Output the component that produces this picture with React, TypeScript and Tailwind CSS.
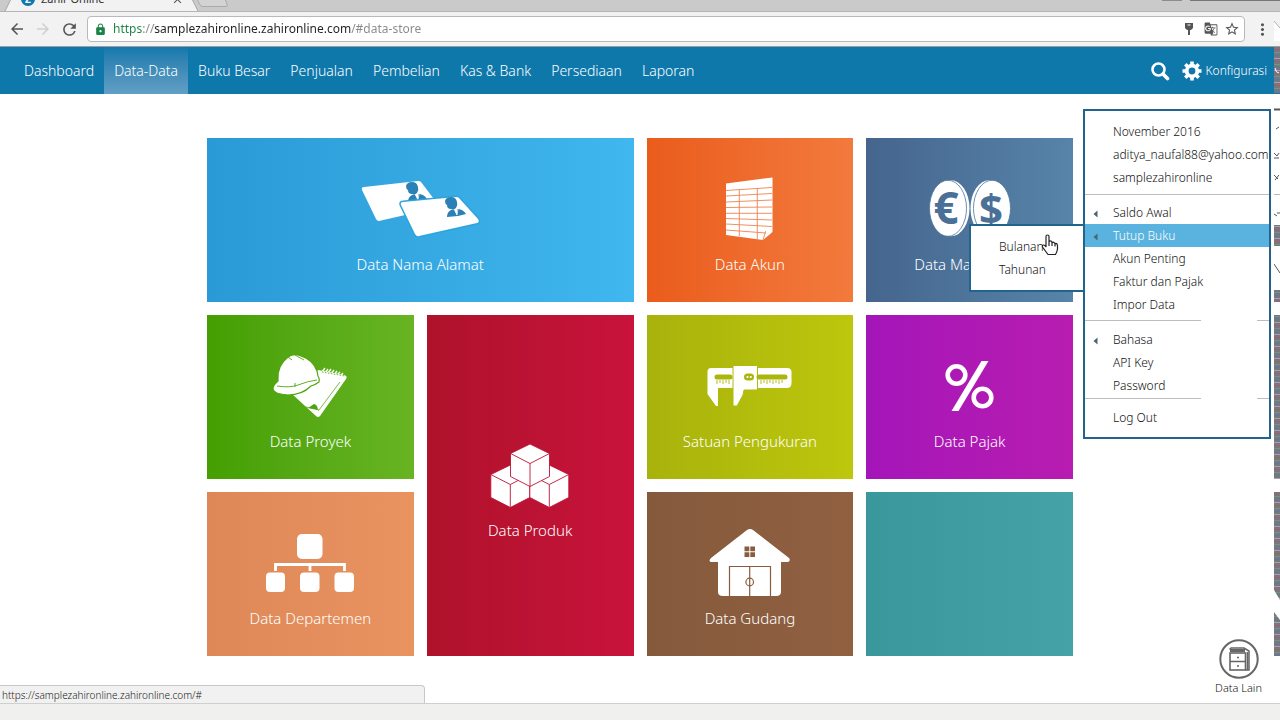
import type { ReactNode } from "react";
import {
  MdArrowBack,
  MdArrowForward,
  MdClose,
  MdGTranslate,
  MdLock,
  MdMoreVert,
  MdRefresh,
  MdStarBorder,
} from "react-icons/md";

type Tile = { label?: string; color: string; span?: string; icon?: ReactNode };

function Art({ children }: { children: ReactNode }) {
  return (
    <svg width="120" height="84" viewBox="0 0 120 84" fill="#fff" aria-hidden="true">
      {children}
    </svg>
  );
}

function Person({ x, y }: { x: number; y: number }) {
  return (
    <g transform={`translate(${x} ${y})`} fill="#2b80b5">
      <path d="M-6-5Q-5-9 0-9Q5-9 6-4Q7-1 5 2Q3 4 0 3Q-4 3-4-1Q-6-2-6-5Z" />
      <path d="M-4 11Q-4 6 0 4L3 3L6 9L6 3Q12 3 15 8L7 10Z" />
      <path d="M3 3L6 9L7 3" fill="none" stroke="#fff" strokeWidth="0.8" />
    </g>
  );
}

const cards = (
  <Art>
    <path d="M4 21L58 15Q60 15 61 16L80 41L19 55Q17 55 16 53L2 24Q1 21 4 21Z" />
    <Person x={52} y={25} />
    <path
      d="M43 36L96 31Q98 31 99 32L118 53Q120 56 117 57L59 70Q57 71 55 68L41 39Q40 36 43 36Z"
      stroke="#2fa3dd"
      strokeWidth="3"
    />
    <path d="M43 36L96 31Q98 31 99 32L118 53Q120 56 117 57L59 70Q57 71 55 68L41 39Q40 36 43 36Z" />
    <Person x={91} y={40} />
  </Art>
);

const sheet = (
  <Art>
    <path d="M36 17.5L82.5 11.5V66L73 74L36 69Z" />
    <g stroke="#f1824d" strokeWidth="0.9" fill="none">
      <path d="M36 24.5L82 21.5M36 30L82 27.5M36 36L82 34M36 41.5L82 41M36 47.3H82M36 52.5L82 54M36 58L82 60.5M36 64L76 67" />
      <path d="M49.3 23.5V70M67.3 22V73" />
      <path d="M73 74L75.5 65.5L82.5 66" />
    </g>
    <path d="M76 71V65L82 60.5V66Z" />
  </Art>
);

const coins = (
  <Art>
    <ellipse cx="41" cy="42.3" rx="18.5" ry="28" />
    <ellipse cx="38" cy="42.3" rx="18.5" ry="28" stroke="#4d739b" strokeWidth="0.8" />
    <ellipse cx="79" cy="42.3" rx="18.5" ry="28" />
    <ellipse cx="82" cy="42.3" rx="18.5" ry="28" stroke="#4d739b" strokeWidth="0.8" />
    <g
      fill="#4b7098"
      fontFamily="'Noto Sans', sans-serif"
      fontWeight="700"
      fontSize="44"
      textAnchor="middle"
    >
      <text x="36" y="58">€</text>
      <text x="81" y="58" fontSize="42">$</text>
    </g>
  </Art>
);

const helmet = (
  <Art>
    <path d="M68 27L94 32Q98 33 96 36L70 73Q68 75 66 73L42 51Z" />
    <path d="M56 64L69 67L90 39" fill="none" stroke="#58aa14" strokeWidth="0.8" />
    <path d="M58 65L64 61Q68 62 68 68L69 67L64 66Z" fill="#4fa30d" />
    <path
      d="M72 29L75 25M75 30L78 26M78 30L81 26M81 31L84 27M84 32L87 28M87 32L90 29M90 33L93 30"
      stroke="#fff"
      strokeWidth="1.4"
    />
    <path d="M72 29L95 33" stroke="#58aa14" strokeWidth="0.9" strokeDasharray="1.5 1.5" />
    <path
      d="M28 36Q27 23 38 14Q44 10 51 13Q63 17 67 28L68 33Q70 36 69 39Q65 42 61 43Q52 52 38 52Q24 51 23 46Q23 42 28 38Z"
      stroke="#52a50f"
      strokeWidth="1.2"
    />
    <path
      d="M27 43Q40 45 48 42Q58 38 67 37M38 14L42 17M45 12L54 17M45 44V40"
      fill="none"
      stroke="#52a50f"
      strokeWidth="0.9"
    />
  </Art>
);

function Cube({ x, y }: { x: number; y: number }) {
  return (
    <g transform={`translate(${x} ${y})`} stroke="#bd1233" strokeWidth="0.9" strokeLinejoin="round">
      <path d="M0-21L19.5-11.5V11.5L0 21.5L-19.5 11.5V-11.5Z" />
      <path d="M-19.5-11.5L0-1.5L19.5-11.5M0-1.5V21.5" fill="none" />
    </g>
  );
}

const cubes = (
  <Art>
    <Cube x={40.3} y={54} />
    <Cube x={79.3} y={54} />
    <Cube x={60} y={33} />
  </Art>
);

const caliper = (
  <Art>
    <path d="M21 25H97Q101.5 25 101.5 29V40Q101.5 45 97 45H54L53 52L47 63H43V45H28V63H26L17.5 51V29Q17.5 25 21 25Z" />
    <path d="M43 22.5H67.5V47H54L53 52L47 63H43Z" stroke="#b1bb0c" strokeWidth="1" />
    <g stroke="#aab60c">
      <path d="M27 34H40M69 34H95" strokeWidth="5" strokeLinecap="round" />
      <path
        d="M27 37V41M30 37V40M33 37V41M36 37V40M39 37V41M71 37V41M74 37V40M77 37V41M80 37V40M83 37V41M86 37V40M89 37V41M92 37V40"
        strokeWidth="0.9"
      />
    </g>
    <rect x="54" y="30.5" width="10" height="7" rx="3.5" fill="#aab60c" />
    <circle cx="57.5" cy="34" r="1.1" />
    <circle cx="60.8" cy="34" r="1.1" />
  </Art>
);

const percent = (
  <Art>
    <g fill="none" stroke="#fff" strokeWidth="4.6">
      <circle cx="46.5" cy="32" r="8.8" />
      <circle cx="72.5" cy="54.5" r="8.8" />
    </g>
    <path d="M71.5 18H78.5L48.5 68H41.5Z" />
  </Art>
);

const orgChart = (
  <Art>
    <rect x="47" y="14" width="25.5" height="25" rx="5" />
    <path d="M25.5 51V44.5H94.5V51M60 44V51" fill="none" stroke="#fff" strokeWidth="2.8" />
    <rect x="16" y="52.5" width="19" height="19.5" rx="4" />
    <rect x="50" y="52.5" width="19.5" height="19.5" rx="4" />
    <rect x="84.5" y="52.5" width="19.5" height="19.5" rx="4" />
  </Art>
);

const warehouse = (
  <Art>
    <path d="M57 10Q60 8 63 10L99 38Q101 41 98 42H91V72Q91 76 86 76H33Q28 76 28 72V42H21Q18 41 21 38Z" />
    <g fill="none" stroke="#8a5c3e" strokeWidth="1.2">
      <path d="M39.5 76V46.5H80.5V76M59.7 46.5V76" />
      <circle cx="59.7" cy="62" r="3.8" />
    </g>
    <path
      d="M54.5 26.5H59.3V31.3H54.5ZM60.3 26.5H65V31.3H60.3ZM54.5 32.3H59.3V37H54.5ZM60.3 32.3H65V37H60.3Z"
      fill="#8a5c3e"
    />
  </Art>
);

const tiles: Tile[] = [
  { label: "Data Nama Alamat", color: "from-[#2a9ad6] to-[#40b7ee]", span: "col-span-2", icon: cards },
  { label: "Data Akun", color: "from-[#ea5c1b] to-[#f27a3c]", icon: sheet },
  { label: "Data Mata Uang", color: "from-[#45658d] to-[#5784aa]", icon: coins },
  { label: "Data Proyek", color: "from-[#449f02] to-[#68b423]", icon: helmet },
  { label: "Data Produk", color: "from-[#af122b] to-[#c8133b]", span: "row-span-2", icon: cubes },
  { label: "Satuan Pengukuran", color: "from-[#a8b20c] to-[#bdc70c]", icon: caliper },
  { label: "Data Pajak", color: "from-[#a415b9] to-[#b81cb0]", icon: percent },
  { label: "Data Departemen", color: "from-[#de8858] to-[#e89360]", icon: orgChart },
  { label: "Data Gudang", color: "from-[#855a3c] to-[#906041]", icon: warehouse },
  { color: "from-[#3a989d] to-[#45a3a7]" },
];

const navItems = [
  "Dashboard",
  "Data-Data",
  "Buku Besar",
  "Penjualan",
  "Pembelian",
  "Kas & Bank",
  "Persediaan",
  "Laporan",
];

function MenuRow({
  label,
  arrow,
  active,
  children,
}: {
  label: string;
  arrow?: boolean;
  active?: boolean;
  children?: ReactNode;
}) {
  return (
    <li className={active ? "relative bg-[#59b3de] text-white" : "relative"}>
      <a href="#" className="flex h-[23px] items-center whitespace-nowrap">
        <span className="flex w-7 shrink-0 pl-2">
          {arrow && (
            <svg width="5" height="8" viewBox="0 0 5 8" className="mt-0.5" aria-hidden="true">
              <path d="M4.5 0.5V7.5L0.5 4Z" fill="#4d6470" />
            </svg>
          )}
        </span>
        {label}
      </a>
      {children}
    </li>
  );
}

function BrokenRule() {
  return (
    <div className="flex justify-between">
      <span className="h-px w-[116px] bg-[#bdbdbd]" />
      <span className="h-px w-3 bg-[#bdbdbd]" />
    </div>
  );
}

function ConfigMenu() {
  return (
    <div className="absolute top-[15px] right-[9px] w-[188px] border-2 border-[#22648b] bg-white text-xs font-light text-[#111]">
      <ul className="border-b border-[#bdbdbd] pt-[9px] pb-[5px]">
        <MenuRow label="November 2016" />
        <MenuRow label="aditya_naufal88@yahoo.com" />
        <MenuRow label="samplezahironline" />
      </ul>
      <ul className="pt-1.5 pb-1">
        <MenuRow label="Saldo Awal" arrow />
        <MenuRow label="Tutup Buku" arrow active>
          <ul className="absolute top-0 right-full w-[116px] border-2 border-[#22648b] bg-white py-[9px] text-[#111]">
            <li>
              <a href="#" className="flex h-[23px] items-center pl-7">Bulanan</a>
            </li>
            <li>
              <a href="#" className="flex h-[23px] items-center pl-7">Tahunan</a>
            </li>
            <li className="pointer-events-none absolute top-2 right-6" aria-hidden="true">
              <svg width="18" height="22" viewBox="0 0 18 22">
                <path
                  d="M5 13V2.5Q5 1 6.5 1Q8 1 8 2.5V8Q8.5 6.5 10 7Q11 7.5 11 9Q12 7.5 13 8.5Q14 9 14 10Q15 9 16 10Q16.5 11 16.5 12V15Q16 18 14.5 20.5H7L1.5 13Q1 11 2.5 11Q4 11 5 13ZM8 8V12M11 9V12M14 10V12.5"
                  fill="#fff"
                  stroke="#222"
                  strokeWidth="1.2"
                />
              </svg>
            </li>
          </ul>
        </MenuRow>
        <MenuRow label="Akun Penting" />
        <MenuRow label="Faktur dan Pajak" />
        <MenuRow label="Impor Data" />
      </ul>
      <BrokenRule />
      <ul className="pt-[7px] pb-px">
        <MenuRow label="Bahasa" arrow />
        <MenuRow label="API Key" />
        <MenuRow label="Password" />
      </ul>
      <BrokenRule />
      <ul className="pt-[7px] pb-2">
        <MenuRow label="Log Out" />
      </ul>
    </div>
  );
}

function BrowserChrome() {
  return (
    <div className="border-b border-[#9d9d9d] bg-[#f2f2f2]">
      <div className="flex h-3 items-end overflow-hidden border-b border-[#b5b5b5] bg-[#cacaca]">
        <svg width="12" height="12" viewBox="0 0 12 12" className="shrink-0" aria-hidden="true">
          <path d="M5 12L11 0H12V12Z" fill="#f2f2f2" />
          <path d="M5 12L11 0" stroke="#a5a5a5" />
        </svg>
        <div className="flex h-6 w-[180px] shrink-0 items-center bg-[#f2f2f2] pl-[9px]">
          <span className="flex size-3.5 items-center justify-center rounded-full bg-[#1277ab] text-[10px] font-bold text-white">
            Z
          </span>
          <span className="ml-1.5 flex-1 text-[11px] leading-6 text-[#333]">Zahir Online</span>
          <button type="button" aria-label="Close tab" className="mr-2 text-[#555]">
            <MdClose size={13} />
          </button>
        </div>
        <svg width="40" height="12" viewBox="0 0 40 12" className="shrink-0" aria-hidden="true">
          <path d="M0 0L6 12H0Z" fill="#f2f2f2" />
          <path d="M0 0L6 12" stroke="#a5a5a5" />
          <path d="M5 0L8 6Q9 7.5 11 7.5H34Q36 7.5 35 5L33 0" fill="#d3d3d3" stroke="#a9a9a9" />
        </svg>
        <div className="ml-auto flex self-start">
          <span className="h-px w-5 bg-[#8d8d8d]" />
          <span className="ml-2 h-px w-[90px] bg-[#777]" />
        </div>
      </div>
      <div className="flex h-[34px] items-center px-2 text-[#555]">
        <button type="button" aria-label="Back"><MdArrowBack size={18} /></button>
        <button type="button" aria-label="Forward" className="ml-2 text-[#cfcfcf]">
          <MdArrowForward size={18} />
        </button>
        <button type="button" aria-label="Reload" className="mr-2 ml-2"><MdRefresh size={19} /></button>
        <div className="flex h-[26px] flex-1 items-center rounded-sm border border-[#b9b9b9] bg-white pr-1 pl-1.5">
          <MdLock size={13} className="text-[#1b8444]" />
          <input
            aria-label="Address"
            defaultValue="https://samplezahironline.zahironline.com/#data-store"
            className="ml-1.5 min-w-0 flex-1 bg-[linear-gradient(90deg,#1b8444_29px,#888_29px,#888_41px,#222_41px,#222_238px,#888_238px)] bg-clip-text text-xs text-transparent outline-none"
          />
          <svg width="10" height="14" viewBox="0 0 10 14" aria-label="Saved password">
            <path d="M1 1H9V6L7 8H6V13H4V8H3L1 6Z" fill="#555" />
            <path d="M3.5 3H6.5" stroke="#fff" />
          </svg>
          <MdGTranslate size={14} className="ml-2.5" />
          <MdStarBorder size={16} className="ml-1.5" />
        </div>
        <button type="button" aria-label="Browser menu" className="ml-2"><MdMoreVert size={19} /></button>
      </div>
    </div>
  );
}

function EdgeNoise() {
  return (
    <svg
      width="6"
      height="720"
      viewBox="0 0 6 720"
      className="pointer-events-none absolute top-0 right-0"
      aria-hidden="true"
    >
      <defs>
        <pattern id="noise" width="6" height="12" patternUnits="userSpaceOnUse">
          <rect width="6" height="12" fill="#77777f" />
          <path d="M0 1.5H6" stroke="#a75f6d" />
          <path d="M0 4.5H6" stroke="#6a9b74" />
          <path d="M0 7.5H6" stroke="#6673a3" />
          <path d="M0 10.5H6" stroke="#a9a0ad" />
        </pattern>
      </defs>
      <path d="M0 20L6 27V41H0Z" fill="#fff" />
      <path d="M0 21L6 28" stroke="#aaa" />
      <g fill="url(#noise)">
        <path d="M0 47H6V93H0ZM0 225H6V246H0ZM0 290H6V302H0ZM0 315H6V479H0ZM0 492H6V600L0 590ZM0 612L6 620V656H0Z" />
      </g>
      <path d="M1 68Q2 73 5 73" stroke="#fff" fill="none" />
      <path d="M0 109.5H6" stroke="#555" strokeWidth="2" />
      <path d="M0 194.5H6" stroke="#bbb" />
      <path
        d="M2 129L5 127M0 153L3 156L5 153M0 158H5M0 175L4 179M1 180L5 175M0 214L3 216M3 213H6M0 264L6 273"
        stroke="#555"
        fill="none"
      />
    </svg>
  );
}

export default function App() {
  return (
    <div className="relative flex min-h-screen flex-col overflow-hidden bg-white font-['Noto_Sans','Open_Sans',sans-serif]">
      <BrowserChrome />
      <header className="flex h-[47px] items-center bg-[#0e78ab] pr-[13px] pl-3.5 text-white">
        <nav className="flex h-full text-sm font-light">
          {navItems.map((item) => (
            <a
              key={item}
              href="#"
              className={
                item === "Data-Data"
                  ? "flex items-center bg-linear-to-b from-[#1279ac] to-[#619fc5] px-2.5"
                  : "flex items-center px-2.5"
              }
            >
              {item}
            </a>
          ))}
        </nav>
        <button type="button" aria-label="Search" className="ml-auto">
          <svg width="20" height="20" viewBox="0 0 20 20" fill="none" stroke="#fff">
            <circle cx="8.5" cy="8.5" r="6" strokeWidth="2.6" />
            <path d="M13 13L17.5 17.5" strokeWidth="3.6" strokeLinecap="round" />
          </svg>
        </button>
        <button type="button" className="ml-3 flex items-center gap-1 text-xs font-light">
          <svg width="20" height="20" viewBox="0 0 20 20" aria-hidden="true">
            <circle cx="10" cy="10" r="5.3" fill="none" stroke="#fff" strokeWidth="3.8" />
            <path
              d="M10 0.5V4M10 16V19.5M0.5 10H4M16 10H19.5M3.3 3.3L5.5 5.5M14.5 14.5L16.7 16.7M3.3 16.7L5.5 14.5M14.5 5.5L16.7 3.3"
              stroke="#fff"
              strokeWidth="3.6"
            />
          </svg>
          Konfigurasi
        </button>
      </header>

      <main className="relative flex-1 px-6 pt-11 pb-[47px]">
        <div className="mx-auto grid max-w-[866px] auto-rows-[164px] grid-cols-4 gap-[13px]">
          {tiles.map((tile, i) => (
            <a
              key={i}
              href="#"
              aria-label={tile.label ?? "Data"}
              className={`flex flex-col items-center justify-center gap-1 bg-linear-to-r text-[15px] leading-5 font-light text-white ${tile.color} ${tile.span ?? ""}`}
            >
              {tile.icon}
              {tile.label}
            </a>
          ))}
        </div>

        <ConfigMenu />

        <a
          href="#"
          className="absolute right-[18px] bottom-[7px] flex flex-col items-center text-[11px] leading-4 font-light text-[#111]"
        >
          <svg
            width="40"
            height="40"
            viewBox="0 0 40 40"
            fill="none"
            stroke="#666"
            className="mb-px"
            aria-hidden="true"
          >
            <circle cx="20" cy="20" r="18.7" strokeWidth="2" />
            <path d="M10.5 10.5L12 9H25L30 12V31H27" strokeWidth="1.5" />
            <path d="M11 11.5H26" strokeWidth="3" />
            <rect x="11" y="14" width="15.5" height="17" strokeWidth="1.6" />
            <path d="M11 22.5H26.5M28.5 13V31" strokeWidth="1.6" />
            <path d="M18 18.5H20M18 27H20" strokeWidth="1.5" />
          </svg>
          Data Lain
        </a>

        <div className="absolute bottom-0 left-0 h-[18px] w-[425px] rounded-tr-sm border-t border-r border-[#c8c8c8] bg-[#f1f1f1] pl-0.5 text-[10px] leading-[18px] font-light text-[#222]">
          https://samplezahironline.zahironline.com/#
        </div>
      </main>
      <footer className="h-[17px] border-t border-[#cfcfcf] bg-[#f0f0ef]" />
      <EdgeNoise />
    </div>
  );
}
